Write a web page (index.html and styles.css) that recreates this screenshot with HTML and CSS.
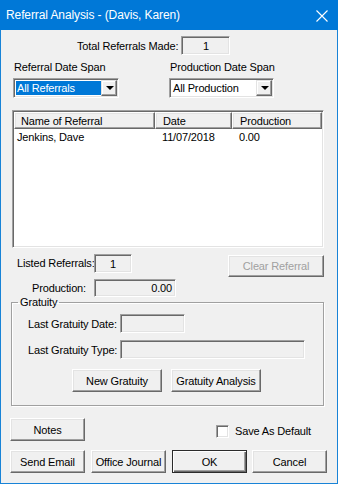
FILE: index.html
```html
<!DOCTYPE html>
<html lang="en">
<head>
    <meta charset="UTF-8">
    <meta name="viewport" content="width=device-width, initial-scale=1.0">
    <title>Referral Analysis</title>
    <link rel="stylesheet" href="styles.css">
</head>
<body>
    <div class="window">
        <div class="titlebar">
            <span class="title">Referral Analysis - (Davis, Karen)</span>
            <svg class="close" width="12" height="12" viewBox="0 0 12 12">
                <path d="M0.5 0.5 L11.5 11.5 M11.5 0.5 L0.5 11.5" stroke="#fff" stroke-width="1.1" fill="none"/>
            </svg>
        </div>

        <div class="client">
            <div class="row total-row">
                <span class="total-label">Total Referrals Made:</span>
                <span class="field total-field">1</span>
            </div>

            <div class="row span-labels">
                <span class="span-label referral-span">Referral Date Span</span>
                <span class="span-label production-span">Production Date Span</span>
            </div>

            <div class="row combo-row">
                <div class="combo referral-combo">
                    <span class="combo-text selected">All Referrals</span>
                    <span class="combo-btn"><span class="arrow"></span></span>
                </div>
                <div class="combo production-combo">
                    <span class="combo-text">All Production</span>
                    <span class="combo-btn"><span class="arrow"></span></span>
                </div>
            </div>

            <div class="listview">
                <div class="lv-header">
                    <span class="lv-col col-name">Name of Referral</span>
                    <span class="lv-col col-date">Date</span>
                    <span class="lv-col col-prod">Production</span>
                </div>
                <div class="lv-row">
                    <span class="lv-cell col-name">Jenkins, Dave</span>
                    <span class="lv-cell col-date">11/07/2018</span>
                    <span class="lv-cell col-prod">0.00</span>
                </div>
            </div>

            <div class="row stat-row listed-row">
                <span class="stat-label listed-label">Listed Referrals:</span>
                <span class="field listed-field">1</span>
                <button class="btn clear-btn" disabled>Clear Referral</button>
            </div>

            <div class="row stat-row production-row">
                <span class="stat-label production-label">Production:</span>
                <span class="field production-field">0.00</span>
            </div>

            <fieldset class="groupbox">
                <legend>Gratuity</legend>
                <div class="row grat-row grat-date">
                    <span class="grat-label">Last Gratuity Date:</span>
                    <span class="field grat-date-field"></span>
                </div>
                <div class="row grat-row grat-type">
                    <span class="grat-label">Last Gratuity Type:</span>
                    <span class="field grat-type-field"></span>
                </div>
                <div class="row grat-buttons">
                    <button class="btn grat-btn">New Gratuity</button>
                    <button class="btn grat-btn">Gratuity Analysis</button>
                </div>
            </fieldset>

            <div class="row notes-row">
                <button class="btn dlg-btn">Notes</button>
                <span class="checkbox"></span>
                <span class="check-label">Save As Default</span>
            </div>

            <div class="row action-row">
                <button class="btn dlg-btn">Send Email</button>
                <button class="btn dlg-btn">Office Journal</button>
                <button class="btn dlg-btn default-btn">OK</button>
                <button class="btn dlg-btn cancel-btn">Cancel</button>
            </div>
        </div>
    </div>
</body>
</html>
```

FILE: styles.css
```css
body {
    margin: 0;
    background-color: #fff;
    font-family: "Liberation Sans", Arial, sans-serif;
    font-size: 11px;
    letter-spacing: -0.15px;
    white-space: nowrap;
    color: #000;
}
.window {
    width: 338px;
    height: 484px;
    box-sizing: border-box;
    border: 1px solid #1883d7;
    border-top: none;
    background-color: #f0f0f0;
}
.titlebar {
    height: 30px;
    margin: 0 -1px;
    background-color: #0078d7;
    color: #fff;
    display: flex;
    align-items: center;
    justify-content: space-between;
    padding: 0 10px 0 6px;
}
.title {
    font-size: 12px;
    letter-spacing: -0.1px;
}
.close {
    display: block;
    margin-top: 1px;
}
.row {
    display: flex;
}

/* 3d borders */
.field {
    box-sizing: border-box;
    display: flex;
    align-items: center;
    justify-content: center;
    border: 1px solid;
    border-color: #a0a0a0 #fff #fff #a0a0a0;
    box-shadow: inset 1px 1px #696969, inset -1px -1px #e3e3e3;
    background-color: #f0f0f0;
}
.btn {
    box-sizing: border-box;
    margin: 0;
    padding: 0;
    font-family: inherit;
    font-size: 11px;
    letter-spacing: -0.15px;
    white-space: nowrap;
    color: #000;
    background-color: #f0f0f0;
    border: 1px solid;
    border-color: #fff #696969 #696969 #fff;
    box-shadow: inset -1px -1px #a0a0a0, inset 1px 1px #e3e3e3;
    border-radius: 0;
}
.btn:disabled {
    color: #a0a0a0;
}

.total-row {
    margin-top: 6px;
    height: 19px;
    align-items: center;
}
.total-label {
    margin-left: 76px;
}
.total-field {
    width: 49px;
    height: 19px;
    margin-left: 3px;
}

.span-labels {
    margin-top: 6px;
    height: 13px;
    line-height: 13px;
}
.referral-span {
    margin-left: 13px;
    width: 156px;
}

.combo-row {
    margin-top: 4px;
}
.combo {
    box-sizing: border-box;
    height: 20px;
    display: flex;
    align-items: stretch;
    border: 1px solid;
    border-color: #a0a0a0 #fff #fff #a0a0a0;
    box-shadow: inset 1px 1px #696969, inset -1px -1px #e3e3e3;
    background-color: #fff;
    padding: 1px;
}
.referral-combo {
    margin-left: 12px;
    width: 106px;
}
.production-combo {
    margin-left: 50px;
    width: 105px;
}
.combo-text {
    flex: 1;
    display: flex;
    align-items: center;
    padding-left: 1px;
    margin: 1px 0 1px 1px;
}
.combo-text.selected {
    background-color: #0078d7;
    color: #fff;
}
.combo-btn {
    width: 16px;
    box-sizing: border-box;
    display: flex;
    align-items: center;
    justify-content: center;
    background-color: #f0f0f0;
    border: 1px solid;
    border-color: #e3e3e3 #696969 #696969 #e3e3e3;
    box-shadow: inset -1px -1px #a0a0a0, inset 1px 1px #fff;
}
.arrow {
    width: 0;
    height: 0;
    border-left: 4px solid transparent;
    border-right: 4px solid transparent;
    border-top: 4px solid #000;
    margin-left: 1px;
}

.listview {
    box-sizing: border-box;
    margin: 12px 0 0 11px;
    width: 312px;
    height: 138px;
    background-color: #fff;
    border: 1px solid;
    border-color: #a0a0a0 #fff #fff #a0a0a0;
    box-shadow: inset 1px 1px #696969, inset -1px -1px #e3e3e3;
    padding: 1px;
}
.lv-header {
    display: flex;
    height: 17px;
}
.lv-col {
    box-sizing: border-box;
    display: flex;
    align-items: center;
    background-color: #f0f0f0;
    border: 1px solid;
    border-color: #fff #696969 #696969 #fff;
    box-shadow: inset -1px -1px #a0a0a0, inset 1px 1px #e3e3e3;
}
.col-name {
    width: 141px;
    padding-left: 6px;
}
.col-date {
    width: 77px;
    padding-left: 7px;
}
.col-prod {
    flex: 1;
    padding-left: 7px;
}
.lv-row {
    display: flex;
    height: 14px;
    margin-top: 1px;
    line-height: 14px;
}
.lv-cell {
    box-sizing: border-box;
}
.lv-cell.col-name {
    padding-left: 3px;
}

.stat-row {
    height: 19px;
    align-items: flex-start;
}
.listed-row {
    margin-top: 6px;
}
.production-row {
    margin-top: 6px;
    height: 18px;
}
.stat-label {
    box-sizing: border-box;
    width: 93px;
    line-height: 19px;
}
.listed-label {
    padding-left: 16px;
}
.production-label {
    padding-left: 31px;
    line-height: 18px;
}
.listed-field {
    width: 38px;
    height: 19px;
}
.production-field {
    width: 82px;
    height: 18px;
    justify-content: flex-end;
    padding-right: 3px;
}
.clear-btn {
    width: 96px;
    height: 22px;
    margin: 1px 13px 0 auto;
}

.groupbox {
    box-sizing: border-box;
    margin: -1px 0 0 10px;
    width: 313px;
    height: 110px;
    padding: 0;
    border: 1px solid #a0a0a0;
    box-shadow: inset 1px 1px #fff, 1px 1px #fff;
}
.groupbox legend {
    margin-left: 6px;
    padding: 0 2px;
    line-height: 13px;
}
.grat-row {
    align-items: center;
}
.grat-date {
    margin-top: 5px;
    height: 19px;
}
.grat-type {
    margin-top: 7px;
    height: 19px;
}
.grat-label {
    box-sizing: border-box;
    width: 108px;
    padding-left: 16px;
}
.grat-date-field {
    width: 65px;
    height: 19px;
}
.grat-type-field {
    width: 185px;
    height: 19px;
}
.grat-buttons {
    margin: 10px 0 0 60px;
    gap: 9px;
}
.grat-btn {
    width: 90px;
    height: 23px;
}

.notes-row {
    margin: 12px 0 0 9px;
    height: 23px;
    align-items: flex-start;
}
.dlg-btn {
    width: 75px;
    height: 23px;
}
.checkbox {
    box-sizing: border-box;
    width: 13px;
    height: 13px;
    margin: 7px 0 0 131px;
    background-color: #fff;
    border: 1px solid;
    border-color: #a0a0a0 #fff #fff #a0a0a0;
    box-shadow: inset 1px 1px #696969, inset -1px -1px #e3e3e3;
}
.check-label {
    margin: 7px 0 0 6px;
    line-height: 13px;
}

.action-row {
    margin: 9px 0 0 9px;
    gap: 6px;
}
.default-btn {
    border: 1px solid #2b2b2b;
    box-shadow: inset 1px 1px #fff, inset -1px -1px #696969, inset -2px -2px #a0a0a0;
}
.cancel-btn {
    margin-left: -1px;
}
```
